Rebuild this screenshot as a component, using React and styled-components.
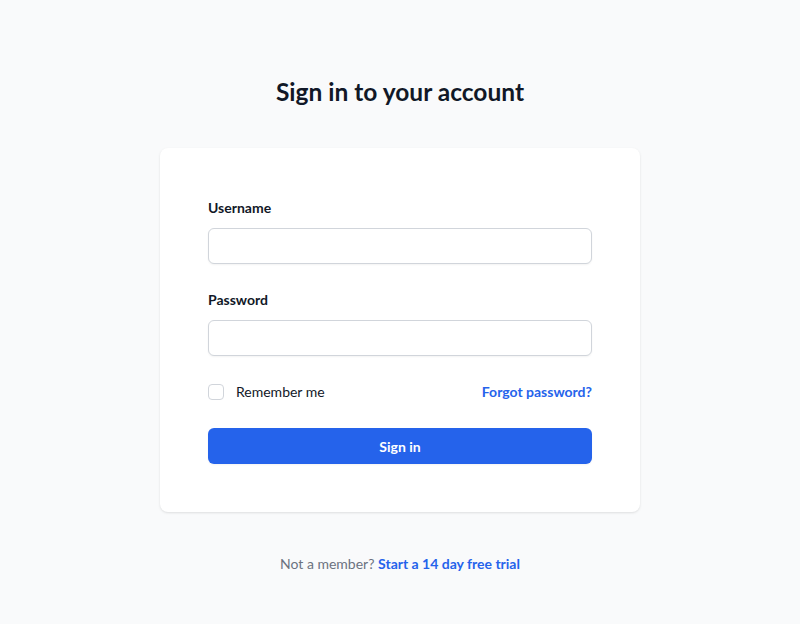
import styled, { createGlobalStyle } from "styled-components";

const GlobalStyle = createGlobalStyle`
  html, body {
    margin: 0;
    padding: 0;
    background: #f9fafb;
    font-family: Lato, "Noto Sans", sans-serif;
    color: #111827;
  }
  * {
    box-sizing: border-box;
  }
`;

const Page = styled.div`
  min-height: 624px;
  display: flex;
  flex-direction: column;
  align-items: center;
  padding: 74px 0 48px;
`;

const Title = styled.h2`
  margin: 0;
  font-size: 24.5px;
  line-height: 36px;
  font-weight: 700;
  color: #111827;
  text-align: center;
`;

const Card = styled.div`
  margin-top: 38px;
  width: 480px;
  background: #ffffff;
  border-radius: 8px;
  box-shadow: 0 1px 3px rgba(0, 0, 0, 0.08), 0 1px 2px rgba(0, 0, 0, 0.04);
  padding: 48px;
`;

const Form = styled.form`
  display: flex;
  flex-direction: column;
  gap: 24px;
`;

const Field = styled.div`
  display: flex;
  flex-direction: column;
  gap: 8px;
`;

const Label = styled.label`
  font-size: 14px;
  line-height: 24px;
  font-weight: 700;
  color: #111827;
`;

const Input = styled.input`
  display: block;
  width: 100%;
  height: 36px;
  border: 1px solid #d1d5db;
  border-radius: 6px;
  padding: 6px 10px;
  font: inherit;
  font-size: 14px;
  color: #111827;
  background: #fff;
  box-shadow: 0 1px 2px rgba(0, 0, 0, 0.05);
  outline: none;
`;

const Row = styled.div`
  display: flex;
  align-items: center;
  justify-content: space-between;
  height: 24px;
`;

const CheckLabel = styled.label`
  display: flex;
  align-items: center;
  gap: 12px;
  font-size: 14px;
  line-height: 24px;
  color: #111827;
`;

const Checkbox = styled.span`
  width: 16px;
  height: 16px;
  border: 1px solid #d1d5db;
  border-radius: 4px;
  background: #fff;
`;

const Link = styled.a`
  font-size: 14px;
  line-height: 24px;
  font-weight: 700;
  color: #2563eb;
  text-decoration: none;
`;

const Button = styled.button`
  width: 100%;
  height: 36px;
  border: none;
  border-radius: 6px;
  background: #2563eb;
  color: #fff;
  font: inherit;
  font-size: 14px;
  font-weight: 700;
  box-shadow: 0 1px 2px rgba(0, 0, 0, 0.05);
  cursor: pointer;
`;

const Footer = styled.p`
  margin: 40px 0 0;
  font-size: 14px;
  line-height: 24px;
  color: #6b7280;
  text-align: center;
`;

export default function App() {
  return (
    <>
      <GlobalStyle />
      <Page>
        <Title>Sign in to your account</Title>
        <Card>
          <Form onSubmit={(e) => e.preventDefault()}>
            <Field>
              <Label htmlFor="username">Username</Label>
              <Input id="username" type="text" />
            </Field>
            <Field>
              <Label htmlFor="password">Password</Label>
              <Input id="password" type="password" />
            </Field>
            <Row>
              <CheckLabel>
                <Checkbox />
                Remember me
              </CheckLabel>
              <Link href="#">Forgot password?</Link>
            </Row>
            <Button type="submit">Sign in</Button>
          </Form>
        </Card>
        <Footer>
          Not a member? <Link href="#">Start a 14 day free trial</Link>
        </Footer>
      </Page>
    </>
  );
}
